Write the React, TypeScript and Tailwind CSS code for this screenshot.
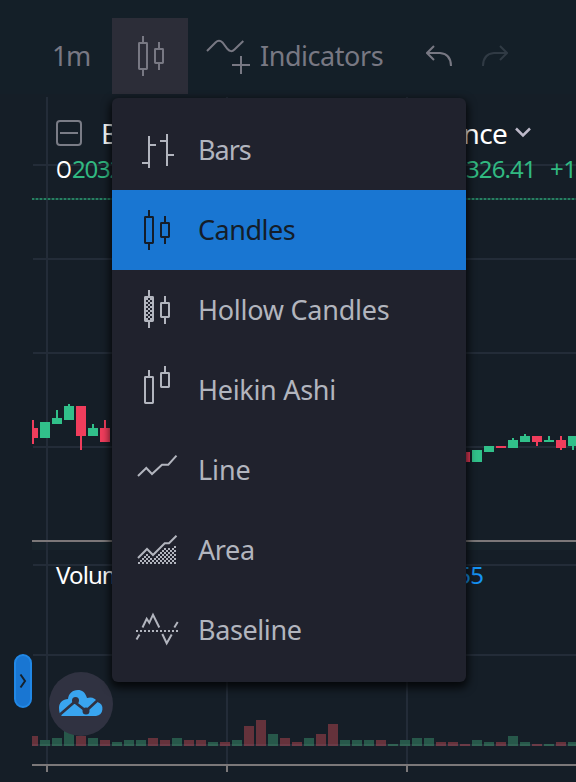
import type { ReactNode } from "react";

type Tone = "g" | "r";

// x, body top, body bottom, wick top, wick bottom
const candles: [Tone, number, number, number, number, number][] = [
  ["r", 28, 428, 438, 420, 444],
  ["g", 40, 422, 438, 422, 438],
  ["g", 52, 418, 424, 410, 424],
  ["g", 64, 406, 420, 404, 420],
  ["r", 76, 406, 436, 406, 450],
  ["g", 88, 428, 436, 424, 436],
  ["r", 100, 428, 442, 420, 442],
  ["r", 460, 452, 462, 452, 462],
  ["g", 472, 450, 462, 450, 462],
  ["g", 484, 446, 452, 446, 452],
  ["r", 496, 446, 448, 446, 448],
  ["g", 508, 440, 448, 438, 448],
  ["g", 520, 436, 442, 434, 442],
  ["r", 532, 436, 442, 436, 446],
  ["g", 544, 440, 442, 436, 442],
  ["r", 556, 440, 448, 436, 450],
  ["g", 568, 436, 446, 436, 450],
];

const volumes: [Tone, number][] = [
  ["r", 10], ["g", 6], ["g", 8], ["g", 16], ["r", 10], ["g", 8], ["r", 6], ["g", 4],
  ["g", 6], ["g", 6], ["r", 8], ["r", 6], ["g", 8], ["r", 6], ["r", 6], ["g", 4],
  ["r", 4], ["g", 6], ["r", 20], ["r", 26], ["g", 12], ["r", 8], ["r", 4], ["g", 8],
  ["r", 12], ["r", 22], ["g", 6], ["g", 6], ["g", 6], ["r", 6], ["g", 2], ["g", 6],
  ["g", 8], ["g", 8], ["r", 4], ["r", 4], ["r", 2], ["g", 6], ["g", 4], ["r", 4],
  ["g", 10], ["g", 4], ["r", 2], ["g", 2], ["r", 4], ["g", 4],
];

function Chart() {
  return (
    <svg className="block h-[688px] w-[576px]" viewBox="0 94 576 688" shapeRendering="crispEdges">
      <defs>
        <clipPath id="plot">
          <rect x="32" y="94" width="544" height="688" />
        </clipPath>
      </defs>
      <rect x="32" y="542" width="544" height="8" fill="#17232b" />
      <g fill="#232c38">
        {[46, 226, 406].map((x) => (
          <rect key={x} x={x} y="97" width="2" height="667" />
        ))}
        {[164, 258, 352, 446, 564, 654, 744].map((y) => (
          <rect key={y} x="33" y={y} width="543" height="2" />
        ))}
      </g>
      <rect x="32" y="198" width="544" height="2" fill="#1a4640" />
      <path d="M32 199H576" stroke="#268060" strokeWidth="2" strokeDasharray="2 2" />
      <g clipPath="url(#plot)">
        {candles.map(([tone, x, top, bottom, high, low]) => (
          <g key={x} fill={tone === "g" ? "#31c08a" : "#f03d5c"}>
            <rect x={x} y={top} width="10" height={bottom - top} />
            <rect x={x === 28 ? 32 : x + 4} y={high} width="2" height={low - high} />
          </g>
        ))}
        {volumes.map(([tone, h], i) => (
          <g key={i}>
            <rect x={28 + i * 12} y={746 - h} width="10" height={h} fill={tone === "g" ? "#27584a" : "#65323b"} />
            <rect x={28 + i * 12} y={744} width="10" height="2" fill={tone === "g" ? "#316253" : "#6c3b47"} />
          </g>
        ))}
      </g>
      <g fill="#7b7879">
        <rect x="32" y="540" width="544" height="2" />
        <rect x="32" y="764" width="544" height="2" />
        {[46, 226, 406].map((x) => (
          <rect key={x} x={x} y="766" width="2" height="6" />
        ))}
      </g>
    </svg>
  );
}

function Icon({ children }: { children: ReactNode }) {
  return (
    <svg className="block size-14 shrink-0" viewBox="0 0 56 56" fill="none" stroke="currentColor" strokeWidth="2">
      {children}
    </svg>
  );
}

// Dither fill made of 2px squares on the even diagonal of a 2px grid
function Checker({ left, right, bottom, top }: { left: number; right: number; bottom: number; top: (x: number) => number }) {
  let d = "";
  for (let x = left; x < right; x += 2) {
    for (let y = bottom - 2; y >= top(x); y -= 2) {
      if (((x - left) / 2 + (bottom - 2 - y) / 2) % 2 === 0) d += `M${x} ${y}h2v2h-2z`;
    }
  }
  return <path d={d} fill="currentColor" stroke="none" shapeRendering="crispEdges" />;
}

const areaTop = (x: number) => (x < 19 ? 49 - x : x < 25 ? 12 + x : x < 37 ? 62 - x : x < 42 ? 25 : 67 - x);

const CandlesIcon = () => (
  <Icon>
    <path d="M21 8v6M21 42v6M37 14v6M37 36v6" />
    <rect x="17" y="15" width="8" height="26" rx=".4" />
    <rect x="33" y="21" width="8" height="14" rx=".4" />
  </Icon>
);

const menu: { label: string; text: string; icon: ReactNode }[] = [
  {
    label: "Bars",
    text: "tracking-[-1px]",
    icon: <Icon><path d="M21 14v32M21 23h7M14 41h6M39 12v32M32 19h6M40 33h6" /></Icon>,
  },
  { label: "Candles", text: "tracking-[-0.5px]", icon: <CandlesIcon /> },
  {
    label: "Hollow Candles",
    text: "tracking-[-0.25px]",
    icon: (
      <Icon>
        <path d="M21 8v6M21 40v6M37 14v6M37 36v6" />
        <rect x="17" y="15" width="8" height="24" rx=".4" />
        <Checker left={18} right={24} bottom={38} top={() => 16} />
        <rect x="33" y="21" width="8" height="14" rx=".4" />
      </Icon>
    ),
  },
  {
    label: "Heikin Ashi",
    text: "tracking-[-0.3px]",
    icon: (
      <Icon>
        <path d="M21 8v6M37 4v6" />
        <rect x="17" y="15" width="8" height="26" rx=".4" />
        <rect x="33" y="11" width="8" height="14" rx=".4" />
      </Icon>
    ),
  },
  {
    label: "Line",
    text: "tracking-[-0.1px]",
    icon: <Icon><path d="M10 34l8.300-8L24 32l10-9.300h6.300l8.200-9" /></Icon>,
  },
  {
    label: "Area",
    text: "tracking-[-0.4px]",
    icon: (
      <Icon>
        <Checker left={10} right={48} bottom={42} top={areaTop} />
        <path d="M10 36l9-9 6 6 11.700-11.700H41l7.500-7.500" />
      </Icon>
    ),
  },
  {
    label: "Baseline",
    text: "tracking-[-0.4px]",
    icon: (
      <Icon>
        <path d="M8 29h42" strokeDasharray="2 2" />
        <path d="M8.500 37.500l3-5M14.500 25.500l4.200-8.800 2.600 4 3.700-8 6.300 12.800M34.300 32l4.400 9.300 5-8.800M46.300 25.500l3.400-5.500" />
      </Icon>
    ),
  },
];

function Toolbar() {
  return (
    <div className="flex h-[94px] items-end bg-[#141f28] text-[27px] text-[#787883]">
      <div className="flex h-[76px] w-28 items-center pl-[52px] tracking-[-1.5px]">1m</div>
      <div className="flex size-[76px] items-center justify-center bg-[#2c2d38]">
        <CandlesIcon />
      </div>
      <div className="flex h-[76px] items-center pl-[18px]">
        <svg className="h-10 w-[54px]" viewBox="206 40 54 40" fill="none" stroke="currentColor" strokeWidth="2">
          <path d="M207 55l8.500-8.500q3.500-3.500 7 0l5 6.500q3.500 4 7 0.500l8.800-8.500" />
          <path d="M241 60v18M232 69h18" />
        </svg>
        <span className="w-[166px] whitespace-nowrap tracking-[-0.45px]">Indicators</span>
        <svg className="h-6 w-[82px]" viewBox="426 44 82 24" fill="none" strokeWidth="2">
          <path d="M434 46l-7 7 7 7M427 53h13q11 1 11 13" stroke="#787883" />
          <path d="M500 46l7 7-7 7M507 53h-13q-11 1-11 13" stroke="#303a44" />
        </svg>
      </div>
    </div>
  );
}

function Legend() {
  return (
    <div className="absolute inset-x-0 top-0 whitespace-nowrap text-white">
      <div className="flex h-[78px] items-center pl-14 text-[28px]">
        <svg className="size-[26px] shrink-0 text-[#7a7c86]" viewBox="0 0 26 26" fill="none" stroke="currentColor" strokeWidth="2">
          <rect x="1" y="1" width="24" height="24" rx="3" />
          <path d="M4 13h18" />
        </svg>
        <span className="w-[315px] shrink-0 pl-[19px]">Bitcoin</span>
        <span className="w-[110px] shrink-0 text-right tracking-[-0.7px]">Binance</span>
        <svg className="ml-2 h-3 w-4 shrink-0 -translate-y-px" viewBox="0 0 16 12" fill="none" stroke="#bdb9c9" strokeWidth="2.500">
          <path d="M1 2.500l7 7 7-7" />
        </svg>
      </div>
      <div className="-mt-[15px] flex h-6 items-center pl-14 text-[24px] leading-6 text-[#31b981]">
        <span className="-mr-[3px] w-[19px] shrink-0 origin-left scale-x-[.84] text-white">O</span>
        <span className="w-[394px] shrink-0 tracking-[-1.2px]">20326</span>
        <span className="w-[84px] shrink-0 tracking-[-0.9px]">326.41</span>
        <span className="shrink-0 tracking-[-0.6px]">+1</span>
      </div>
    </div>
  );
}

export default function App() {
  return (
    <div className="relative h-[782px] w-[576px] overflow-hidden bg-[#151e27] font-['Noto_Sans',sans-serif]">
      <Toolbar />
      <div className="relative h-[688px]">
        <Chart />
        <Legend />
        <div className="absolute left-14 top-[465px] flex w-[427px] justify-between text-[24px] leading-8 tracking-[-0.9px]">
          <span className="text-white">Volume</span>
          <span className="text-[#1593f5]">55</span>
        </div>
        <button className="absolute left-[14px] top-[560px] flex h-[54px] w-[18px] items-center justify-center rounded-full border-2 border-[#2188e6] bg-[#1976d2]">
          <svg className="h-4 w-2" viewBox="0 0 8 16" fill="none" stroke="#15212d" strokeWidth="2">
            <path d="M1.500 1.500L6 8l-4.500 6.500" />
          </svg>
        </button>
        <div className="absolute left-[49px] top-[578px] size-16 rounded-full bg-[#303241]">
          <svg className="size-16" viewBox="0 0 64 64">
            <path d="M13 44h34a7.200 7.200 0 0 0 1.500-14Q45 24 38 26C36 20 33 18 29 18c-6 0-9.500 4-10 9-5 0-9 3.500-9 9 0 4 1 7 3 8z" fill="#39a5ef" />
            <path d="M11 42.500L25.500 30 37 39l13-12" fill="none" stroke="#303241" strokeWidth="2.600" />
            <circle cx="26.500" cy="28.500" r="3.500" fill="#303241" />
            <circle cx="37" cy="39" r="3.500" fill="#303241" />
          </svg>
        </div>
      </div>
      <div className="absolute left-28 top-[98px] w-[354px] rounded-md bg-[#20222d] py-3 text-[#b2b5be] shadow-[0_4px_8px_2px_rgba(0,0,0,0.75)]">
        {menu.map(({ label, text, icon }) => (
          <div
            key={label}
            className={`flex h-20 items-center gap-[14px] pl-4 text-[27px] ${label === "Candles" ? "bg-[#1976d2] text-[#141d29]" : ""}`}
          >
            {icon}
            <span className={text}>{label}</span>
          </div>
        ))}
      </div>
    </div>
  );
}
